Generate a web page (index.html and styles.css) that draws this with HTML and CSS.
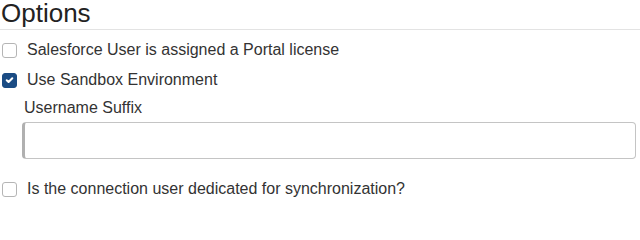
FILE: index.html
```html
<!DOCTYPE html>
<html>
<head>
<meta charset="utf-8">
<link rel="stylesheet" href="styles.css">
</head>
<body>
<div class="panel">
  <h2 class="title">Options</h2>
  <label class="check-row">
    <span class="box"></span>
    <span class="text">Salesforce User is assigned a Portal license</span>
  </label>
  <label class="check-row">
    <span class="box checked">
      <svg viewBox="0 0 14 14" width="14" height="14"><path d="M4 7.3 L6 9.2 L10 5.2" fill="none" stroke="#fff" stroke-width="2.2" stroke-linecap="round" stroke-linejoin="round"/></svg>
    </span>
    <span class="text">Use Sandbox Environment</span>
  </label>
  <div class="field">
    <div class="field-label">Username Suffix</div>
    <div class="input"></div>
  </div>
  <label class="check-row last">
    <span class="box"></span>
    <span class="text">Is the connection user dedicated for synchronization?</span>
  </label>
</div>
</body>
</html>
```

FILE: styles.css
```css
html, body {
  margin: 0;
  padding: 0;
  background: #fff;
}
body {
  font-family: "Liberation Sans", Arial, sans-serif;
  color: #333;
}
.panel {
  width: 640px;
}
.title {
  margin: 0;
  font-size: 26px;
  font-weight: normal;
  line-height: 27px;
  padding: 0 0 2px 1px;
  border-bottom: 1px solid #e3e3e3;
  color: #222;
}
.check-row {
  display: flex;
  align-items: center;
  gap: 10px;
  height: 30px;
  padding-left: 2px;
  font-size: 16px;
}
.check-row:first-of-type {
  margin-top: 5px;
}
.box {
  width: 13px;
  height: 13px;
  border: 1px solid #b5b5b5;
  border-radius: 3px;
  background: #fff;
  flex: none;
  display: flex;
  align-items: center;
  justify-content: center;
}
.box.checked {
  background: #1b4c84;
  border-color: #1b4c84;
}
.box svg {
  display: block;
}
.field {
  padding: 3px 4px 0 22px;
}
.field-label {
  font-size: 16px;
  line-height: 20px;
  padding-left: 2px;
}
.input {
  margin-top: 4px;
  height: 35px;
  border: 1px solid #c4c4c4;
  border-left: 3px solid #b0b0b0;
  border-radius: 4px;
}
.check-row.last {
  margin-top: 15px;
}
```
